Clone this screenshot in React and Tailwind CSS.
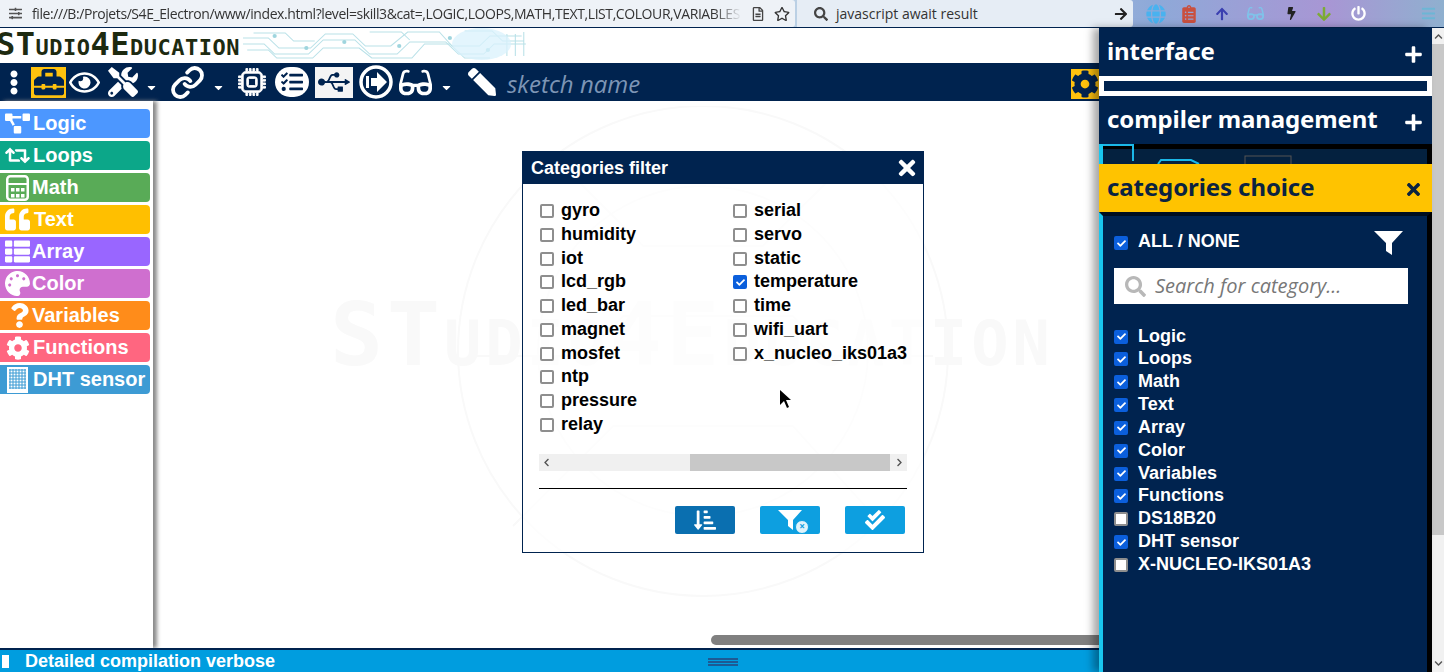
import React from "react";
import {
  FaEllipsisV, FaToolbox, FaRegEye, FaTools, FaTasks, FaUsb, FaGlasses,
  FaPen, FaCog, FaPlus, FaTimes, FaSearch, FaProjectDiagram, FaRetweet,
  FaQuoteLeft, FaThList, FaPalette, FaQuestion, FaSortAmountDownAlt, FaCheckDouble, FaChevronLeft, FaChevronRight, FaChevronUp, FaChevronDown,
  FaCaretDown, FaRegStar, FaRegFileAlt, FaBolt, FaPowerOff, FaArrowRight, FaBars, FaSlidersH, FaArrowUp, FaArrowDown, FaClipboardList, FaGlobe, FaCheck,
} from "react-icons/fa";
import { BsCpu } from "react-icons/bs";
import { LuLink } from "react-icons/lu";

const sans = "font-['Liberation_Sans',Arial,sans-serif]";

function GridIcon() {
  return (
    <svg width="21" height="26" viewBox="0 0 21 26" className="shrink-0">
      <rect width="21" height="26" fill="#fff" />
      {[3, 6, 9, 12, 15, 18].map((x) => <line key={x} x1={x} y1="2" x2={x} y2="22" stroke="#3d9bd4" strokeWidth="1" />)}
      {[3, 6, 9, 12, 15, 18, 21].map((y) => <line key={y} x1="2" y1={y} x2="19" y2={y} stroke="#3d9bd4" strokeWidth="1" />)}
    </svg>
  );
}

function CalcIcon() {
  return (
    <svg width="23" height="26" viewBox="0 0 23 26" className="shrink-0">
      <rect x="1.25" y="1.25" width="20.5" height="23.5" rx="3" fill="none" stroke="#fff" strokeWidth="2.5" />
      <rect x="1" y="8" width="21" height="2" fill="#fff" />
      {[5, 10, 15].map((x) => [13, 19].map((y) => <rect key={`${x}${y}`} x={x} y={y} width="3.5" height="3.5" fill="#fff" />))}
    </svg>
  );
}

const blocks = [
  ["Logic", "bg-[#4c97ff]", <FaProjectDiagram size={25} />, "w-[33px] pl-[5px]"],
  ["Loops", "bg-[#0ca789]", <FaRetweet size={25} />, "w-[33px] pl-[5px]"],
  ["Math", "bg-[#59ab57]", <CalcIcon />, "w-[32px] pl-[6px]"],
  ["Text", "bg-[#ffbf00]", <FaQuoteLeft size={25} />, "w-[34px] pl-[5px]"],
  ["Array", "bg-[#9966ff]", <FaThList size={25} />, "w-[32px] pl-[5px]"],
  ["Color", "bg-[#cf6fcf]", <FaPalette size={25} />, "w-[32px] pl-[5px]"],
  ["Variables", "bg-[#ff8c1a]", <FaQuestion size={25} />, "w-[32px] pl-[7px]"],
  ["Functions", "bg-[#ff6680]", <FaCog size={24} />, "w-[33px] pl-[6px]"],
  ["DHT sensor", "bg-[#3d9bd4]", <GridIcon />, "w-[33px] pl-[7px]"],
];

const col1 = ["gyro", "humidity", "iot", "lcd_rgb", "led_bar", "magnet", "mosfet", "ntp", "pressure", "relay"];
const col2 = ["serial", "servo", "static", "temperature", "time", "wifi_uart", "x_nucleo_iks01a3"];
const cats = [
  ["Logic", 1], ["Loops", 1], ["Math", 1], ["Text", 1], ["Array", 1], ["Color", 1], ["Variables", 1],
  ["Functions", 1], ["DS18B20", 0], ["DHT sensor", 1], ["X-NUCLEO-IKS01A3", 0],
];

function Check({ on }) {
  return (
    <span className="relative w-[14px] h-[14px] mt-[4px] shrink-0 inline-flex items-center justify-center">
      <input type="checkbox" readOnly checked={!!on} className="appearance-none w-[14px] h-[14px] m-0 rounded-[2px] bg-white border-2 border-[#8e8e8e] checked:bg-[#0b5fdc] checked:border-[#0b5fdc]" />
      {on ? <FaCheck size={9} color="#fff" className="absolute left-[2.5px] top-[2.5px]" /> : null}
    </span>
  );
}

function CircuitLogo() {
  return (
    <svg width="285" height="35" viewBox="0 0 270 35" preserveAspectRatio="none" className="absolute left-[243px] top-0" fill="none" stroke="#b9e1e8" strokeWidth="1">
      <path d="M0 10h24l10 10h30l14-14h26l12 12h24l16-14h30l12 14h26l10-10h30" />
      <path d="M0 16h20l10 10h32l14-14h30l14 14h26l12-12h34l12 12h24l10-10h30" />
      <path d="M4 22h20l8 8h34l10-10h34l12 10h38l12-14h24l14 14h24" />
      <path d="M10 5h30l8 8h20M120 4h30l8 8M210 3h26l10 10h20M250 6v22M258 6v22M266 4v24" />
      <g fill="#9fd5de" stroke="none">
        <circle cx="30" cy="8" r="2" /><circle cx="60" cy="20" r="2" /><circle cx="96" cy="14" r="2" /><circle cx="148" cy="18" r="2" /><circle cx="196" cy="10" r="2" /><circle cx="232" cy="22" r="2" />
      </g>
      <ellipse cx="226" cy="16" rx="28" ry="16" fill="#d9f2fc" stroke="none" opacity=".75" />
    </svg>
  );
}

function Watermark() {
  return (
    <div className="absolute left-0 top-[5px] w-[946px] h-[540px] pointer-events-none overflow-hidden">
      <svg width="946" height="540" fill="none" stroke="#f9f9f9" strokeWidth="2" className="absolute inset-0">
        <circle cx="550" cy="245" r="245" />
        <circle cx="550" cy="245" r="165" />
        <path d="M400 50l90 90h120l80-80M360 420l100-100h180l90 100M320 250h110l40-40h170l40 40h100" />
      </svg>
      <div className="absolute left-[177px] top-[185px] text-[88px] leading-none font-bold text-[#f9f9f9] font-['DejaVu_Sans_Mono',monospace] tracking-[4px] whitespace-nowrap [font-variant:small-caps]">
        STudio4Education
      </div>
    </div>
  );
}

function BrowserBar() {
  return (
    <div className="h-[27px] flex bg-[linear-gradient(90deg,#cfdcea,#b9cfe4_60%,#8ea9d8_80%,#a896d4_92%,#8fb0cf)] shrink-0">
      <div className="w-[795px] bg-[#eef2f7] flex items-center pl-[9px] rounded-r-[3px] text-[14px] text-[#333] font-['Open_Sans',sans-serif] overflow-hidden whitespace-nowrap">
        <FaSlidersH size={13} className="mr-[10px] shrink-0" color="#555" />
        <span className="w-[710px] overflow-hidden tracking-[-0.42px] [mask-image:linear-gradient(90deg,#000_96%,transparent)]">file:///B:/Projets/S4E_Electron/www/index.html?level=skill3&cat=,LOGIC,LOOPS,MATH,TEXT,LIST,COLOUR,VARIABLES</span>
        <FaRegFileAlt size={14} className="ml-[9px] shrink-0" color="#444" />
        <FaRegStar size={16} className="ml-[9px] shrink-0" color="#333" />
      </div>
      <div className="ml-[2px] w-[336px] bg-[#e6edf5] flex items-center pl-[17px] rounded-r-[3px] text-[14px] text-[#333] font-['Open_Sans',sans-serif]">
        <FaSearch size={14} color="#444" />
        <span className="ml-[8px]">javascript await result</span>
        <FaArrowRight size={14} color="#222" className="ml-auto mr-[5px]" />
      </div>
      <div className="flex items-center flex-1 relative">
        <FaGlobe size={20} color="#49b2ef" className="absolute left-[13px]" />
        <FaClipboardList size={18} color="#c9503f" className="absolute left-[47px]" />
        <FaArrowUp size={14} color="#3a3fb0" className="absolute left-[82px]" />
        <FaGlasses size={17} color="#7fc3ea" className="absolute left-[114px]" />
        <FaBolt size={13} color="#222" className="absolute left-[152px]" />
        <FaArrowDown size={16} color="#7cab35" className="absolute left-[183px]" />
        <FaPowerOff size={15} color="#fff" className="absolute left-[218px]" />
        <FaBars size={15} color="#6cb6d5" className="absolute left-[288px]" />
      </div>
    </div>
  );
}

function Caret({ ml }) {
  return <FaCaretDown size={13} color="#fff" className={`${ml} mt-[10px] shrink-0`} />;
}

function SignIn() {
  return (
    <svg width="34" height="34" viewBox="0 0 34 34" className="ml-[6px] shrink-0">
      <circle cx="17" cy="17" r="15" fill="none" stroke="#fff" strokeWidth="3.5" />
      <rect x="7" y="11" width="3" height="12" fill="#fff" />
      <path d="M12 13h6V7l10 10-10 10v-6h-6z" fill="#fff" />
    </svg>
  );
}

function Toolbar() {
  return (
    <div className="h-[38px] bg-[#00234f] flex items-center shrink-0 relative">
      <FaEllipsisV size={25} color="#fff" className="ml-[1px] w-[26px]" />
      <div className="ml-[4px] w-[35px] h-[31px] bg-[#ffc20e] flex items-center justify-center"><FaToolbox size={30} color="#00234f" /></div>
      <FaRegEye size={31} color="#fff" className="ml-[3px]" />
      <FaTools size={30} color="#fff" className="ml-[8px]" />
      <Caret ml="ml-[7px]" />
      <LuLink size={35} color="#fff" strokeWidth={2.6} className="ml-[12px] shrink-0" />
      <Caret ml="ml-[7px]" />
      <BsCpu size={28} color="#fff" strokeWidth={0.5} className="ml-[13px] shrink-0" />
      <div className="ml-[9px] w-[34px] h-[30px] rounded-[15px] bg-white flex items-center justify-center"><FaTasks size={22} color="#00234f" /></div>
      <div className="ml-[6px] w-[38px] h-[31px] bg-[#f4f4f4] flex items-center justify-center"><FaUsb size={32} color="#00234f" /></div>
      <SignIn />
      <FaGlasses size={33} color="#fff" className="ml-[6px]" />
      <Caret ml="ml-[8px]" />
      <FaPen size={28} color="#fff" className="ml-[15px] -scale-x-100" />
      <span className="ml-[11px] mt-[3px] text-[24px] italic text-[#7d95b5] font-['Open_Sans',sans-serif]">sketch name</span>
      <div className="absolute right-0 top-[6px] w-[28px] h-[30px] bg-[#ffc20e] flex items-center justify-center"><FaCog size={28} color="#00234f" /></div>
    </div>
  );
}

function Sidebar() {
  return (
    <div className="w-[153px] h-full bg-white shadow-[4px_0_4px_#8a8a8a] pt-[8px] flex flex-col gap-[3px] shrink-0 relative z-10">
      {blocks.map(([name, bg, icon, cls]) => (
        <div key={name} className={`w-[150px] h-[29px] rounded-r-[4px] ${bg} text-white flex items-center overflow-hidden`}>
          <div className={`${cls} shrink-0 flex items-center`}>{icon}</div>
          <span className={`${sans} font-bold text-[20px] whitespace-nowrap mb-[2px]`}>{name}</span>
        </div>
      ))}
    </div>
  );
}

function ModalColumn({ items, checked, width }) {
  return (
    <div className={`${width} flex flex-col`}>
      {items.map((it) => (
        <div key={it} className="h-[23.75px] flex items-start gap-[7px]">
          <Check on={it === checked} />
          <span className={`${sans} font-bold text-[18px] leading-[20px] text-black whitespace-nowrap`}>{it}</span>
        </div>
      ))}
    </div>
  );
}

function FilterClear() {
  return (
    <span className="relative inline-flex">
      <svg width="24" height="20" viewBox="0 0 24 20"><path d="M0 0H24L15 10V20L10 16V10Z" fill="#fff" /></svg>
      <span className="absolute -right-[7px] -bottom-[4px] w-[14px] h-[14px] rounded-full bg-[#dff3fb] border border-[#0d9fe0] text-[#0d9fe0] text-[10px] leading-[11px] text-center font-bold">×</span>
    </span>
  );
}

function Modal() {
  return (
    <div className="absolute left-[522px] top-[50px] w-[402px] h-[402px] bg-white/70 border border-[#00234f] z-20 flex flex-col">
      <div className="h-[32px] bg-[#00234f] flex items-center justify-between pl-[8px] pr-[4px] shrink-0">
        <span className={`${sans} font-bold text-[18px] text-white`}>Categories filter</span>
        <FaTimes size={24} color="#fff" />
      </div>
      <div className="pl-[17px] pt-[16px] flex h-[259px] shrink-0">
        <ModalColumn items={col1} width="w-[193px]" />
        <ModalColumn items={col2} checked="temperature" width="flex-1" />
      </div>
      <div className="mx-[16px] w-[368px] h-[17px] bg-[#f0f0f0] flex items-center justify-between shrink-0 relative mt-[11px]">
        <FaChevronLeft size={9} color="#555" className="ml-[3px]" />
        <div className="absolute left-[151px] top-0 w-[200px] h-[17px] bg-[#c8c8c8]" />
        <FaChevronRight size={9} color="#555" className="mr-[3px]" />
      </div>
      <div className="mx-[16px] w-[368px] h-px bg-black mt-[17px] shrink-0" />
      <div className="flex justify-end gap-[25px] pr-[18px] mt-[17px]">
        <div className="w-[60px] h-[28px] bg-[#0a6fb0] rounded-[2px] flex items-center justify-center"><FaSortAmountDownAlt size={22} color="#fff" /></div>
        <div className="w-[60px] h-[28px] bg-[#0d9fe0] rounded-[2px] flex items-center justify-center"><FilterClear /></div>
        <div className="w-[60px] h-[28px] bg-[#0d9fe0] rounded-[2px] flex items-center justify-center"><FaCheckDouble size={20} color="#fff" /></div>
      </div>
      <svg width="14" height="20" viewBox="0 0 14 20" className="absolute left-[256px] top-[237px]">
        <path d="M1 1v15l4-4 3 7 2-1-3-7h5z" fill="#000" />
      </svg>
    </div>
  );
}

function BottomBar() {
  return (
    <div className="h-[24px] bg-[#009ddf] border-t-2 border-[#00234f] flex items-center relative shrink-0 z-10">
      <div className="ml-[2px] w-[7px] h-[13px] bg-white" />
      <span className={`${sans} ml-[16px] mt-[1px] font-bold text-[18px] text-white whitespace-nowrap`}>Detailed compilation verbose</span>
      <div className="absolute left-[708px] top-[8px] w-[30px] flex flex-col gap-[1px]">
        <div className="h-[2px] bg-[#1d5a94]" /><div className="h-[2px] bg-[#1d5a94]" /><div className="h-[2px] bg-[#1d5a94]" />
      </div>
    </div>
  );
}

function PanelHead({ title, yellow }) {
  return (
    <div className={`h-[48px] flex items-center justify-between pl-[8px] pr-[9px] shrink-0 ${yellow ? "bg-[#ffc300] text-[#0b2340]" : "bg-[#00234f] text-white"}`}>
      <span className="text-[24px] font-bold font-['Noto_Sans',sans-serif] tracking-[-0.1px] whitespace-nowrap mb-[2px]">{title}</span>
      {yellow ? <FaTimes size={19} className="mt-[3px]" /> : <FaPlus size={19} className="mt-[4px]" />}
    </div>
  );
}

function RightPanel() {
  return (
    <div className="w-[333px] flex flex-col shrink-0 shadow-[-6px_0_8px_rgba(0,0,0,0.35)] relative z-30 bg-[#00234f]">
      <PanelHead title="interface" />
      <div className="h-[20px] border-[5px] border-white bg-[#00234f] shrink-0" />
      <PanelHead title="compiler management" />
      <div className="h-[20px] bg-black border-l-[4px] border-[#19c7f0] shrink-0 relative overflow-hidden">
        <div className="absolute left-0 right-[5px] top-[5px] h-[15px] bg-[#04213f]" />
        <svg width="330" height="20" fill="none" className="absolute left-0 top-0">
          <path d="M0 1h30v16M55 20l3-4h30l8 4" stroke="#1bb8e8" strokeWidth="2" />
          <rect x="142" y="12" width="46" height="10" stroke="#555" />
        </svg>
      </div>
      <PanelHead title="categories choice" yellow />
      <div className="flex-1 border-l-[4px] border-[#19c7f0] border-r-[5px] border-r-black border-t-[4px] border-t-black/60 pl-[11px] text-white">
        <div className="h-[50px] flex items-center relative">
          <Check on />
          <span className={`${sans} ml-[10px] font-bold text-[18px]`}>ALL / NONE</span>
          <svg width="29" height="24" viewBox="0 0 29 24" className="absolute left-[260px] top-[15px]">
            <path d="M0 0H29L18 12V24L12 20V12Z" fill="#fff" />
          </svg>
        </div>
        <div className="w-[294px] h-[36px] bg-white flex items-center pl-[11px] mt-[2px]">
          <FaSearch size={21} color="#b8b8b8" />
          <span className="ml-[9px] text-[20px] italic text-[#777] font-['Open_Sans',sans-serif]">Search for category...</span>
        </div>
        <div className="mt-[21.5px] flex flex-col">
          {cats.map(([n, on]) => (
            <div key={n} className="h-[22.85px] flex items-start gap-[10px]">
              <Check on={on} />
              <span className={`${sans} font-bold text-[18px] leading-[20px] whitespace-nowrap`}>{n}</span>
            </div>
          ))}
        </div>
      </div>
    </div>
  );
}

export default function App() {
  return (
    <div className="w-[1444px] h-[672px] overflow-hidden flex flex-col bg-white">
      <BrowserBar />
      <div className="h-px bg-[#00234f] shrink-0" />
      <div className="flex flex-1 min-h-0">
        <div className="w-[1099px] flex flex-col shrink-0 min-h-0">
          <div className="h-[35px] bg-white relative overflow-hidden shrink-0">
            <CircuitLogo />
            <span className="absolute left-[-4px] top-[-4px] text-[32px] leading-[40px] font-bold text-[#1d2a10] font-['DejaVu_Sans_Mono',monospace] tracking-[0.5px] [font-variant:small-caps] whitespace-nowrap">STudio4Education</span>
          </div>
          <Toolbar />
          <div className="flex-1 min-h-0 flex relative">
            <Sidebar />
            <div className="flex-1 relative bg-white overflow-hidden">
              <Watermark />
              <div className="absolute left-[558px] bottom-[3px] w-[400px] h-[10px] rounded-l-[5px] bg-[#808080]" />
            </div>
            <Modal />
          </div>
          <BottomBar />
        </div>
        <RightPanel />
        <div className="w-[12px] flex flex-col bg-[#f1f1f1] relative">
          <div className="h-[491px] bg-[#c8c8c8] mt-[16px]" />
          <FaChevronUp size={9} color="#555" className="absolute left-[2px] top-[4px]" />
          <FaChevronDown size={9} color="#555" className="absolute left-[2px] bottom-[4px]" />
        </div>
      </div>
    </div>
  );
}
